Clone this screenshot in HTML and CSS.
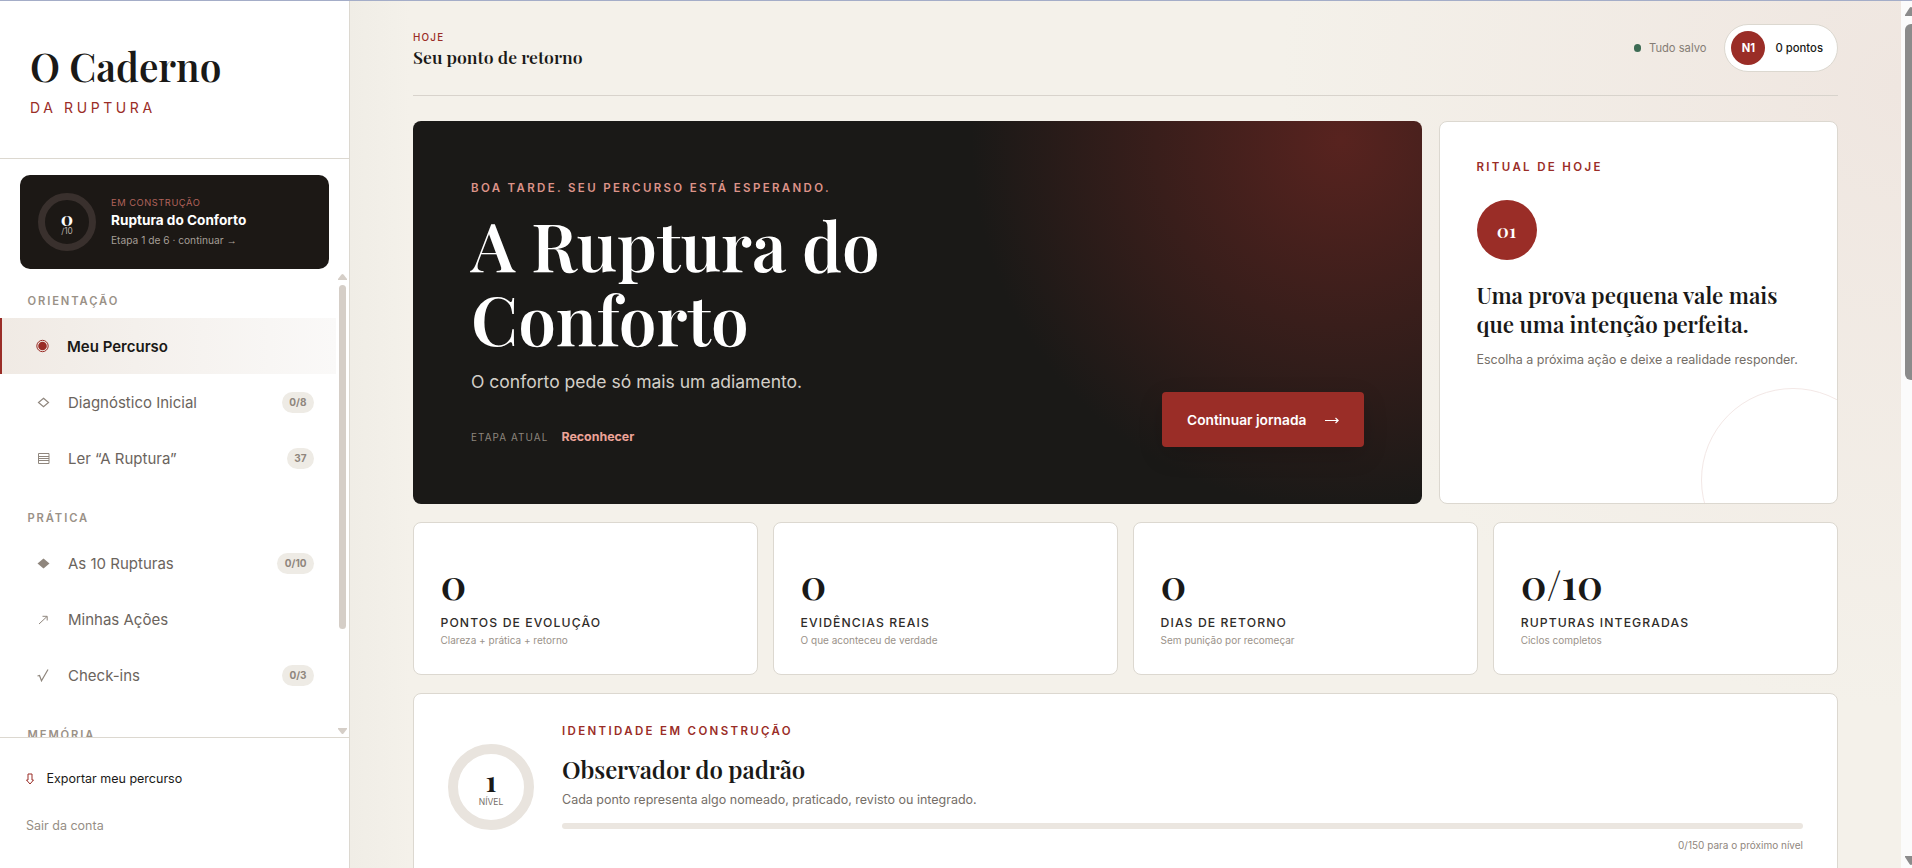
FILE: index.html
```html
<!DOCTYPE html>
<html lang="pt-BR">
  <head>
    <meta charset="utf-8" />
    <title>O Caderno da Ruptura</title>
    <meta name="viewport" content="width=device-width, initial-scale=1.0" />
    <link rel="stylesheet" href="styles.css">
  </head>

  <body>
    <aside class="sidebar">
      <div class="brand">
        <div class="brand-name">O Caderno</div>
        <div class="brand-sub">DA RUPTURA</div>
      </div>

      <a class="current">
        <div class="ring ring-small">
          <b>0</b>
          <small>/10</small>
        </div>
        <div class="current-text">
          <span class="current-label">EM CONSTRUÇÃO</span>
          <strong>Ruptura do Conforto</strong>
          <span class="current-step">Etapa 1 de 6 · continuar <i>→</i></span>
        </div>
      </a>

      <nav class="nav">
        <div class="nav-list">
          <h6>ORIENTAÇÃO</h6>
          <a class="nav-item active">
            <svg viewBox="0 0 14 14"><circle cx="6.500" cy="7" r="5.700" fill="none" stroke="currentColor"/><circle cx="6.500" cy="7" r="4.300" fill="currentColor"/></svg>
            <span>Meu Percurso</span>
          </a>
          <a class="nav-item">
            <svg viewBox="0 0 14 14"><path d="M7.500 3.200l5 4.300-5 4.300-5-4.300z" fill="none" stroke="currentColor" stroke-width="1.200"/></svg>
            <span>Diagnóstico Inicial</span>
            <i class="badge">0/8</i>
          </a>
          <a class="nav-item">
            <svg viewBox="0 0 14 14"><path d="M2.500 2.500h10.500v10h-10.500zM2.500 5.500h10.500M2.500 7.500h10.500M2.500 9.500h10.500" fill="none" stroke="currentColor"/></svg>
            <span>Ler “A Ruptura”</span>
            <i class="badge">37</i>
          </a>

          <h6>PRÁTICA</h6>
          <a class="nav-item">
            <svg viewBox="0 0 14 14"><path d="M7.500 2.500l6 5-6 5-6-5z" fill="currentColor"/></svg>
            <span>As 10 Rupturas</span>
            <i class="badge">0/10</i>
          </a>
          <a class="nav-item">
            <svg viewBox="0 0 14 14"><path d="M3 12l8-7.500M6.500 4.300h4.700v4.200" fill="none" stroke="currentColor"/></svg>
            <span>Minhas Ações</span>
          </a>
          <a class="nav-item">
            <svg viewBox="0 0 14 14"><path d="M1.500 8l2-.5 2 5.300L12 1.500" fill="none" stroke="currentColor" stroke-width="1.200"/></svg>
            <span>Check-ins</span>
            <i class="badge">0/3</i>
          </a>

          <h6>MEMÓRIA</h6>
        </div>
        <div class="nav-scroll">
          <svg viewBox="0 0 9 6"><path d="M3.500 .5q1-1 2 0L9 5v1H0V5z"/></svg>
          <div class="nav-thumb"></div>
          <svg viewBox="0 0 9 6"><path d="M3.500 5.500q1 1 2 0L9 1V0H0v1z"/></svg>
        </div>
      </nav>

      <div class="sidebar-foot">
        <a class="export">
          <svg viewBox="0 0 8 12"><path d="M2 1h4v6h1.500L4 11 .5 7H2z" fill="none" stroke="currentColor"/></svg>
          Exportar meu percurso
        </a>
        <a class="logout">Sair da conta</a>
      </div>
    </aside>

    <main class="main">
      <header class="topbar">
        <div class="topbar-title">
          <span>HOJE</span>
          <strong>Seu ponto de retorno</strong>
        </div>
        <div class="saved">Tudo salvo</div>
        <div class="points">
          <b>N1</b>
          0 pontos
        </div>
      </header>

      <div class="top-row">
        <section class="hero">
          <div class="hero-text">
            <p class="eyebrow">BOA TARDE. SEU PERCURSO ESTÁ ESPERANDO.</p>
            <h1>A Ruptura do<br/>Conforto</h1>
            <p class="lead">O conforto pede só mais um adiamento.</p>
            <p class="stage"><span>ETAPA ATUAL</span><b>Reconhecer</b></p>
          </div>
          <button class="cta">
            Continuar jornada
            <svg viewBox="0 0 14 8"><path d="M0 4.500h13M10.500 2l2.700 2.500-2.700 2.500" fill="none" stroke="currentColor" stroke-width="1.200"/></svg>
          </button>
        </section>

        <section class="ritual">
          <p class="eyebrow">RITUAL DE HOJE</p>
          <div class="ritual-number">01</div>
          <h2>Uma prova pequena vale mais que uma intenção perfeita.</h2>
          <p class="muted">Escolha a próxima ação e deixe a realidade responder.</p>
        </section>
      </div>

      <div class="stats">
        <div class="stat">
          <b>0</b>
          <strong>PONTOS DE EVOLUÇÃO</strong>
          <small>Clareza + prática + retorno</small>
        </div>
        <div class="stat">
          <b>0</b>
          <strong>EVIDÊNCIAS REAIS</strong>
          <small>O que aconteceu de verdade</small>
        </div>
        <div class="stat">
          <b>0</b>
          <strong>DIAS DE RETORNO</strong>
          <small>Sem punição por recomeçar</small>
        </div>
        <div class="stat">
          <b>0/10</b>
          <strong>RUPTURAS INTEGRADAS</strong>
          <small>Ciclos completos</small>
        </div>
      </div>

      <section class="identity">
        <div class="ring ring-big">
          <b>1</b>
          <small>NÍVEL</small>
        </div>
        <div class="identity-text">
          <p class="eyebrow">IDENTIDADE EM CONSTRUÇÃO</p>
          <h2>Observador do padrão</h2>
          <p class="muted">Cada ponto representa algo nomeado, praticado, revisto ou integrado.</p>
          <div class="bar"></div>
          <p class="next-level">0/150 para o próximo nível</p>
        </div>
      </section>
    </main>

    <div class="page-scroll">
      <svg viewBox="0 0 12 9"><path d="M4.500 1q1.500-2 3 0L12 8v1H0V8z"/></svg>
      <div class="page-thumb"></div>
      <svg viewBox="0 0 12 9"><path d="M4.500 8q1.500 2 3 0L12 1V0H0v1z"/></svg>
    </div>
  </body>
</html>
```
FILE: styles.css
```css
:root {
  --red: #9a2d27;
  --ink: #1a1917;
  --line: #dcd8d0;
  --serif: 'Playfair Display', 'Liberation Serif', serif;
}
* {
  box-sizing: border-box;
}
body {
  display: flex;
  height: 100vh;
  margin: 0;
  overflow: hidden;
  border-top: 1px solid #a4adc8;
  font-family: Inter, sans-serif;
  color: var(--ink);
  background: #f4f1ea;
}
h1, h2, h6, p {
  margin: 0;
}
h1, h2 {
  font-family: var(--serif);
  font-weight: 600;
}
svg {
  display: block;
}

/* sidebar */
.sidebar {
  display: flex;
  flex-direction: column;
  flex: none;
  width: 350px;
  border-right: 1px solid var(--line);
  background: #fff;
}
.brand {
  flex: none;
  height: 158px;
  padding: 41px 30px 0;
  border-bottom: 1px solid var(--line);
}
.brand-name {
  font: 600 38.7px/48px var(--serif);
}
.brand-sub {
  margin-top: 8px;
  font-size: 14px;
  line-height: 20px;
  letter-spacing: 3.6px;
  color: var(--red);
}
.current {
  display: flex;
  align-items: center;
  flex: none;
  gap: 15px;
  height: 94px;
  margin: 16px 20px 0;
  padding-left: 18px;
  border-radius: 10px;
  background: #1c1815;
  color: #fff;
}
.ring {
  display: flex;
  flex-direction: column;
  align-items: center;
  justify-content: center;
  flex: none;
  border-radius: 50%;
}
.ring b {
  font-family: var(--serif);
}
.ring-small {
  width: 58px;
  height: 58px;
  padding-top: 4px;
  border: 7px solid #39302d;
}
.ring-small b {
  font-size: 19.2px;
  line-height: 12px;
}
.ring-small small {
  margin-top: 2px;
  font-size: 8.3px;
  line-height: 11px;
  color: #b5aea7;
}
.current-text {
  display: flex;
  flex-direction: column;
}
.current-label {
  font-size: 9.3px;
  line-height: 14px;
  letter-spacing: 0.55px;
  color: #b0625a;
}
.current strong {
  font-size: 13.6px;
  line-height: 21px;
}
.current-step {
  font-size: 10.2px;
  line-height: 18px;
  color: #a59e96;
}
.current-step i {
  font-family: 'Liberation Sans', sans-serif;
  font-style: normal;
  line-height: 1;
}
.nav {
  display: flex;
  flex: 1;
  min-height: 0;
  overflow: hidden;
}
.nav-list {
  flex: none;
  width: 336px;
}
.nav h6 {
  margin: 24px 27.5px 9px;
  font-size: 11.2px;
  font-weight: 600;
  line-height: 16px;
  letter-spacing: 1.9px;
  color: #9a9187;
}
.nav-item {
  display: flex;
  align-items: center;
  height: 56px;
  padding: 0 22px 0 36px;
  font-size: 15px;
  color: #6b645d;
}
.nav-item svg {
  width: 14px;
  height: 14px;
  margin-right: 18px;
  color: #8f867d;
}
.nav-item.active {
  padding-left: 34px;
  border-left: 2px solid var(--red);
  font-weight: 600;
  color: var(--ink);
  background: linear-gradient(90deg, #f0eae4, #faf9f8);
}
.nav-item.active svg {
  margin-right: 17px;
  color: var(--red);
}
.badge {
  margin-left: auto;
  padding: 0 7.5px;
  border-radius: 11px;
  font-size: 10px;
  font-style: normal;
  font-weight: 700;
  line-height: 21px;
  color: #8f867d;
  background: #eeebe5;
}
.nav-scroll {
  display: flex;
  flex-direction: column;
  align-items: center;
  flex: 1;
  padding: 5px 0 3px 0;
}
.nav-scroll svg {
  width: 9px;
  height: 6px;
  fill: #d5cec7;
}
.nav-thumb {
  width: 7px;
  height: 344px;
  margin: 5px 0 auto;
  border-radius: 4px;
  background: #d5cec7;
}
.sidebar-foot {
  flex: none;
  height: 131px;
  padding: 28px 26px 0;
  border-top: 1px solid var(--line);
}
.export {
  display: flex;
  align-items: center;
  gap: 12.5px;
  height: 24px;
  font-size: 12.5px;
}
.export svg {
  width: 8px;
  height: 12px;
  margin-top: 2px;
  color: var(--red);
}
.logout {
  display: block;
  margin-top: 24px;
  font-size: 12.5px;
  line-height: 24px;
  color: #968e85;
}

/* main column */
.main {
  flex: 1;
  min-width: 0;
  padding: 0 63px;
  background:
    radial-gradient(circle at 100% 10%, #efe6e0 0, rgba(239, 230, 224, 0) 620px),
    linear-gradient(90deg, #f0ede6, #f4f1ea 60px);
}
.topbar {
  display: flex;
  align-items: center;
  height: 95px;
  border-bottom: 1px solid #d8d3cc;
}
.topbar-title {
  display: flex;
  flex-direction: column;
  margin: 3px auto 0 0;
}
.topbar-title span {
  font-size: 9.9px;
  font-weight: 500;
  line-height: 15px;
  letter-spacing: 1.2px;
  color: var(--red);
}
.topbar-title strong {
  font: 600 17.6px/24px var(--serif);
}
.saved {
  display: flex;
  align-items: center;
  gap: 8px;
  margin-right: 18px;
  font-size: 11.2px;
  color: #857d75;
}
.saved:before {
  content: '';
  width: 7px;
  height: 8px;
  border-radius: 4px;
  background: #3d6b54;
}
.points {
  display: flex;
  align-items: center;
  gap: 10px;
  height: 48px;
  padding: 0 14px 0 6px;
  border: 1px solid var(--line);
  border-radius: 24px;
  font-size: 11.3px;
  font-weight: 500;
  background: #fff;
}
.points b {
  width: 34px;
  border-radius: 50%;
  font-size: 11.2px;
  line-height: 34px;
  text-align: center;
  color: #fff;
  background: var(--red);
}
.top-row {
  display: grid;
  grid-template-columns: 1009px 1fr;
  gap: 17px;
  height: 383px;
  margin-top: 25px;
}
.eyebrow {
  font-size: 11.5px;
  font-weight: 600;
  line-height: 16px;
  letter-spacing: 2.34px;
  color: var(--red);
}
.muted {
  font-size: 12.5px;
  line-height: 20px;
  color: #756e67;
}
.hero {
  display: flex;
  justify-content: space-between;
  padding: 59px 58px 57px;
  border-radius: 8px;
  color: #fff;
  background: radial-gradient(circle at 92% 5%, #58231f 0, #1a1917 370px);
}
.hero .eyebrow {
  color: #dd9389;
}
.hero h1 {
  margin-top: 11px;
  font-size: 67.4px;
  line-height: 74px;
}
.lead {
  margin-top: 13px;
  font-size: 17.55px;
  line-height: 28px;
  color: #d3cfc8;
}
.stage {
  display: flex;
  align-items: baseline;
  gap: 13px;
  margin-top: 31px;
  line-height: 20px;
}
.stage span {
  font-size: 9.9px;
  letter-spacing: 1.1px;
  color: #8d867e;
}
.stage b {
  font-size: 12.4px;
  color: #eda398;
}
.cta {
  display: flex;
  align-items: center;
  align-self: flex-end;
  justify-content: space-between;
  width: 202px;
  height: 55px;
  padding: 0 25px;
  border: 0;
  border-radius: 4px;
  font: 600 13.76px Inter, sans-serif;
  white-space: nowrap;
  color: #fff;
  background: var(--red);
  box-shadow: 0 8px 24px rgba(0, 0, 0, 0.15);
}
.cta svg {
  width: 14px;
  height: 8px;
}
.ritual,
.stat,
.identity {
  border: 1px solid var(--line);
  border-radius: 8px;
  background: #fff;
}
.ritual {
  position: relative;
  overflow: hidden;
  padding: 37px 30px 0 36.5px;
}
/* decorative circle cut by the corner */
.ritual:after {
  content: '';
  position: absolute;
  right: -48px;
  bottom: -69px;
  width: 182px;
  height: 182px;
  border: 1px solid #f3e8e6;
  border-radius: 50%;
}
.ritual-number {
  width: 60px;
  height: 60px;
  margin: 25px 0 21px;
  border-radius: 50%;
  font: 600 19.2px/60px var(--serif);
  text-align: center;
  color: #fff;
  background: var(--red);
}
.ritual h2 {
  font-size: 22.4px;
  line-height: 29px;
}
.ritual .muted {
  margin-top: 11px;
  white-space: nowrap;
}
.stats {
  display: grid;
  grid-template-columns: repeat(4, 1fr);
  gap: 15.2px;
  margin: 18px 0;
}
.stat {
  display: flex;
  flex-direction: column;
  align-items: flex-start;
  height: 153px;
  padding: 43px 26.5px 0;
}
.stat b {
  font: 600 41px/34px var(--serif);
}
.stat strong {
  margin-top: 14px;
  font-size: 12.2px;
  font-weight: 500;
  line-height: 18px;
  letter-spacing: 1.1px;
  color: #2f2c29;
}
.stat small {
  margin-top: 1px;
  font-size: 10px;
  line-height: 14px;
  color: #9a9289;
}
.identity {
  display: flex;
  align-items: center;
  gap: 28px;
  height: 220px;
  padding: 28px 34px 60px;
}
.ring-big {
  width: 86px;
  height: 86px;
  padding-top: 4px;
  border: 10px solid #e9e4de;
}
.ring-big b {
  font-size: 28.8px;
  line-height: 20px;
}
.ring-big small {
  margin-top: 6px;
  font-size: 8.5px;
  line-height: 12px;
  color: #756e67;
}
.identity-text {
  flex: 1;
}
.identity h2 {
  margin-top: 14px;
  font-size: 24px;
  line-height: 32px;
  letter-spacing: -0.1px;
}
.identity .muted {
  margin-top: 5px;
}
.bar {
  height: 6px;
  margin: 13px 0 9px;
  border-radius: 3px;
  background: #ebe6e0;
}
.next-level {
  font-size: 10px;
  line-height: 14px;
  text-align: right;
  color: #8f867d;
}

/* page scrollbar, cut by the window edge */
.page-scroll {
  display: flex;
  flex-direction: column;
  align-items: flex-start;
  flex: none;
  width: 11px;
  padding: 6px 0 3px 4px;
  overflow: hidden;
  background: #fbfbfb;
}
.page-scroll svg {
  flex: none;
  width: 12px;
  height: 9px;
  fill: #8b8b8b;
}
.page-thumb {
  width: 12px;
  height: 356px;
  margin: 8px 0 auto;
  border-radius: 6px;
  background: #8b8b8b;
}
```
